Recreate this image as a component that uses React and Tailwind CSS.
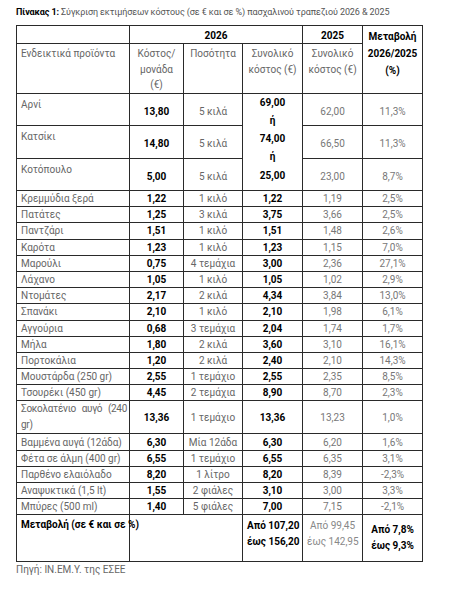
import React from 'react'

// Πίνακας κόστους πασχαλινού τραπεζιού
const rows = [
  { name: 'Κρεμμύδια ξερά', unit: '1,22', qty: '1 κιλό', total: '1,22', prev: '1,19', pct: '2,5%' },
  { name: 'Πατάτες', unit: '1,25', qty: '3 κιλά', total: '3,75', prev: '3,66', pct: '2,5%' },
  { name: 'Παντζάρι', unit: '1,51', qty: '1 κιλό', total: '1,51', prev: '1,48', pct: '2,6%' },
  { name: 'Καρότα', unit: '1,23', qty: '1 κιλό', total: '1,23', prev: '1,15', pct: '7,0%' },
  { name: 'Μαρούλι', unit: '0,75', qty: '4 τεμάχια', total: '3,00', prev: '2,36', pct: '27,1%' },
  { name: 'Λάχανο', unit: '1,05', qty: '1 κιλό', total: '1,05', prev: '1,02', pct: '2,9%' },
  { name: 'Ντομάτες', unit: '2,17', qty: '2 κιλά', total: '4,34', prev: '3,84', pct: '13,0%' },
  { name: 'Σπανάκι', unit: '2,10', qty: '1 κιλό', total: '2,10', prev: '1,98', pct: '6,1%' },
  { name: 'Αγγούρια', unit: '0,68', qty: '3 τεμάχια', total: '2,04', prev: '1,74', pct: '1,7%' },
  { name: 'Μήλα', unit: '1,80', qty: '2 κιλά', total: '3,60', prev: '3,10', pct: '16,1%' },
  { name: 'Πορτοκάλια', unit: '1,20', qty: '2 κιλά', total: '2,40', prev: '2,10', pct: '14,3%' },
  { name: 'Μουστάρδα (250 gr)', unit: '2,55', qty: '1 τεμάχιο', total: '2,55', prev: '2,35', pct: '8,5%' },
  { name: 'Τσουρέκι (450 gr)', unit: '4,45', qty: '2 τεμάχια', total: '8,90', prev: '8,70', pct: '2,3%' },
]

const rows2 = [
  { name: 'Βαμμένα αυγά (12άδα)', unit: '6,30', qty: 'Μία 12άδα', total: '6,30', prev: '6,20', pct: '1,6%' },
  { name: 'Φέτα σε άλμη (400 gr)', unit: '6,55', qty: '1 τεμάχιο', total: '6,55', prev: '6,35', pct: '3,1%' },
  { name: 'Παρθένο ελαιόλαδο', unit: '8,20', qty: '1 λίτρο', total: '8,20', prev: '8,39', pct: '-2,3%' },
  { name: 'Αναψυκτικά (1,5 lt)', unit: '1,55', qty: '2 φιάλες', total: '3,10', prev: '3,00', pct: '3,3%' },
  { name: 'Μπύρες (500 ml)', unit: '1,40', qty: '5 φιάλες', total: '7,00', prev: '7,15', pct: '-2,1%' },
]

const meat = [
  { name: 'Αρνί', unit: '13,80', prev: '62,00', pct: '11,3%' },
  { name: 'Κατσίκι', unit: '14,80', prev: '66,50', pct: '11,3%' },
  { name: 'Κοτόπουλο', unit: '5,00', prev: '23,00', pct: '8,7%' },
]

const cell = 'border border-[#2a2a2a] px-1 py-0 whitespace-nowrap'

function Row({ r }) {
  return (
    <tr className="h-[16.2px]">
      <td className={`${cell} text-left text-[#666]`}>{r.name}</td>
      <td className={`${cell} text-center font-bold text-black`}>{r.unit}</td>
      <td className={`${cell} text-center text-[#666]`}>{r.qty}</td>
      <td className={`${cell} text-center font-bold text-black`}>{r.total}</td>
      <td className={`${cell} text-center text-[#777]`}>{r.prev}</td>
      <td className={`${cell} text-center text-[#777]`}>{r.pct}</td>
    </tr>
  )
}

export default function App() {
  return (
    <div className="w-[456px] h-[595px] bg-white font-['Roboto',sans-serif] text-[10px] leading-[15px]">
      <div className="pl-4 pt-[5px] h-[25px] text-[9px] text-[#555] tracking-[-0.1px] whitespace-nowrap">
        <span className="font-bold text-black">Πίνακας 1:</span> Σύγκριση εκτιμήσεων κόστους (σε € και σε %) πασχαλινού τραπεζιού 2026 &amp; 2025
      </div>

      <table className="ml-4 w-[406px] table-fixed border-collapse border-[1.5px] border-[#2a2a2a]">
        <colgroup>
          <col className="w-[113px]" />
          <col className="w-[54px]" />
          <col className="w-[59px]" />
          <col className="w-[60px]" />
          <col className="w-[60px]" />
          <col className="w-[60px]" />
        </colgroup>
        <tbody>
          {/* κεφαλίδα */}
          <tr className="h-[18px]">
            <td className={cell}></td>
            <td colSpan={3} className={`${cell} text-center pt-[2px] font-bold text-black`}>2026</td>
            <td className={`${cell} text-center pt-[2px] font-bold text-black`}>2025</td>
            <td rowSpan={2} className={`${cell} text-center align-top pt-[2px] font-bold text-black leading-[17px]`}>
              Μεταβολή<br />2026/2025<br />(%)
            </td>
          </tr>
          <tr className="h-[47px]">
            <td className={`${cell} align-top pt-[2px] text-[#666]`}>Ενδεικτικά προϊόντα</td>
            <td className={`${cell} align-top pt-[2px] text-center text-[#666] leading-[15.5px]`}>Κόστος/<br />μονάδα<br />(€)</td>
            <td className={`${cell} align-top pt-[2px] text-center text-[#666]`}>Ποσότητα</td>
            <td className={`${cell} align-top pt-[2px] text-center text-[#666] leading-[16px]`}>Συνολικό<br />κόστος (€)</td>
            <td className={`${cell} align-top pt-[2px] text-center text-[#666] leading-[16px]`}>Συνολικό<br />κόστος (€)</td>
          </tr>

          {/* κρέατα */}
          {meat.map((m, i) => (
            <tr key={m.name} className="h-[32.5px]">
              <td className={`${cell} align-top pt-[3px] text-[#666]`}>{m.name}</td>
              <td className={`${cell} text-center pt-[4px] font-bold text-black`}>{m.unit}</td>
              <td className={`${cell} text-center pt-[4px] text-[#666]`}>5 κιλά</td>
              {i === 0 && (
                <td rowSpan={3} className={`${cell} text-center align-top font-bold text-black leading-[18.3px]`}>
                  69,00<br />ή<br />74,00<br />ή<br />25,00
                </td>
              )}
              <td className={`${cell} text-center pt-[4px] text-[#777]`}>{m.prev}</td>
              <td className={`${cell} text-center pt-[4px] text-[#777]`}>{m.pct}</td>
            </tr>
          ))}

          {rows.map(r => <Row key={r.name} r={r} />)}

          <tr className="h-[33px]">
            <td className="border border-[#2a2a2a] pl-1 pr-[2px] py-0 text-justify text-[#666] leading-[16px] tracking-[-0.3px]">Σοκολατένιο αυγό (240 gr)</td>
            <td className={`${cell} text-center font-bold text-black`}>13,36</td>
            <td className={`${cell} text-center text-[#666]`}>1 τεμάχιο</td>
            <td className={`${cell} text-center font-bold text-black`}>13,36</td>
            <td className={`${cell} text-center text-[#777]`}>13,23</td>
            <td className={`${cell} text-center text-[#777]`}>1,0%</td>
          </tr>

          {rows2.map(r => <Row key={r.name} r={r} />)}

          {/* σύνολα */}
          <tr className="h-[47px]">
            <td className={`${cell} align-top pt-[2px] font-bold text-black`}>Μεταβολή (σε € και σε %)</td>
            <td colSpan={2} className={cell}></td>
            <td className={`${cell} align-top pt-[3px] text-center font-bold text-black leading-[16px]`}>Από 107,20<br />έως 156,20</td>
            <td className={`${cell} align-top pt-[3px] text-center text-[#888] leading-[16px]`}>Από 99,45<br />έως 142,95</td>
            <td className={`${cell} text-center font-bold text-black leading-[16px]`}>Από 7,8%<br />έως 9,3%</td>
          </tr>
        </tbody>
      </table>

      <div className="pl-4 text-[#666]">Πηγή: IN.EM.Y. της ΕΣΕΕ</div>
    </div>
  )
}
